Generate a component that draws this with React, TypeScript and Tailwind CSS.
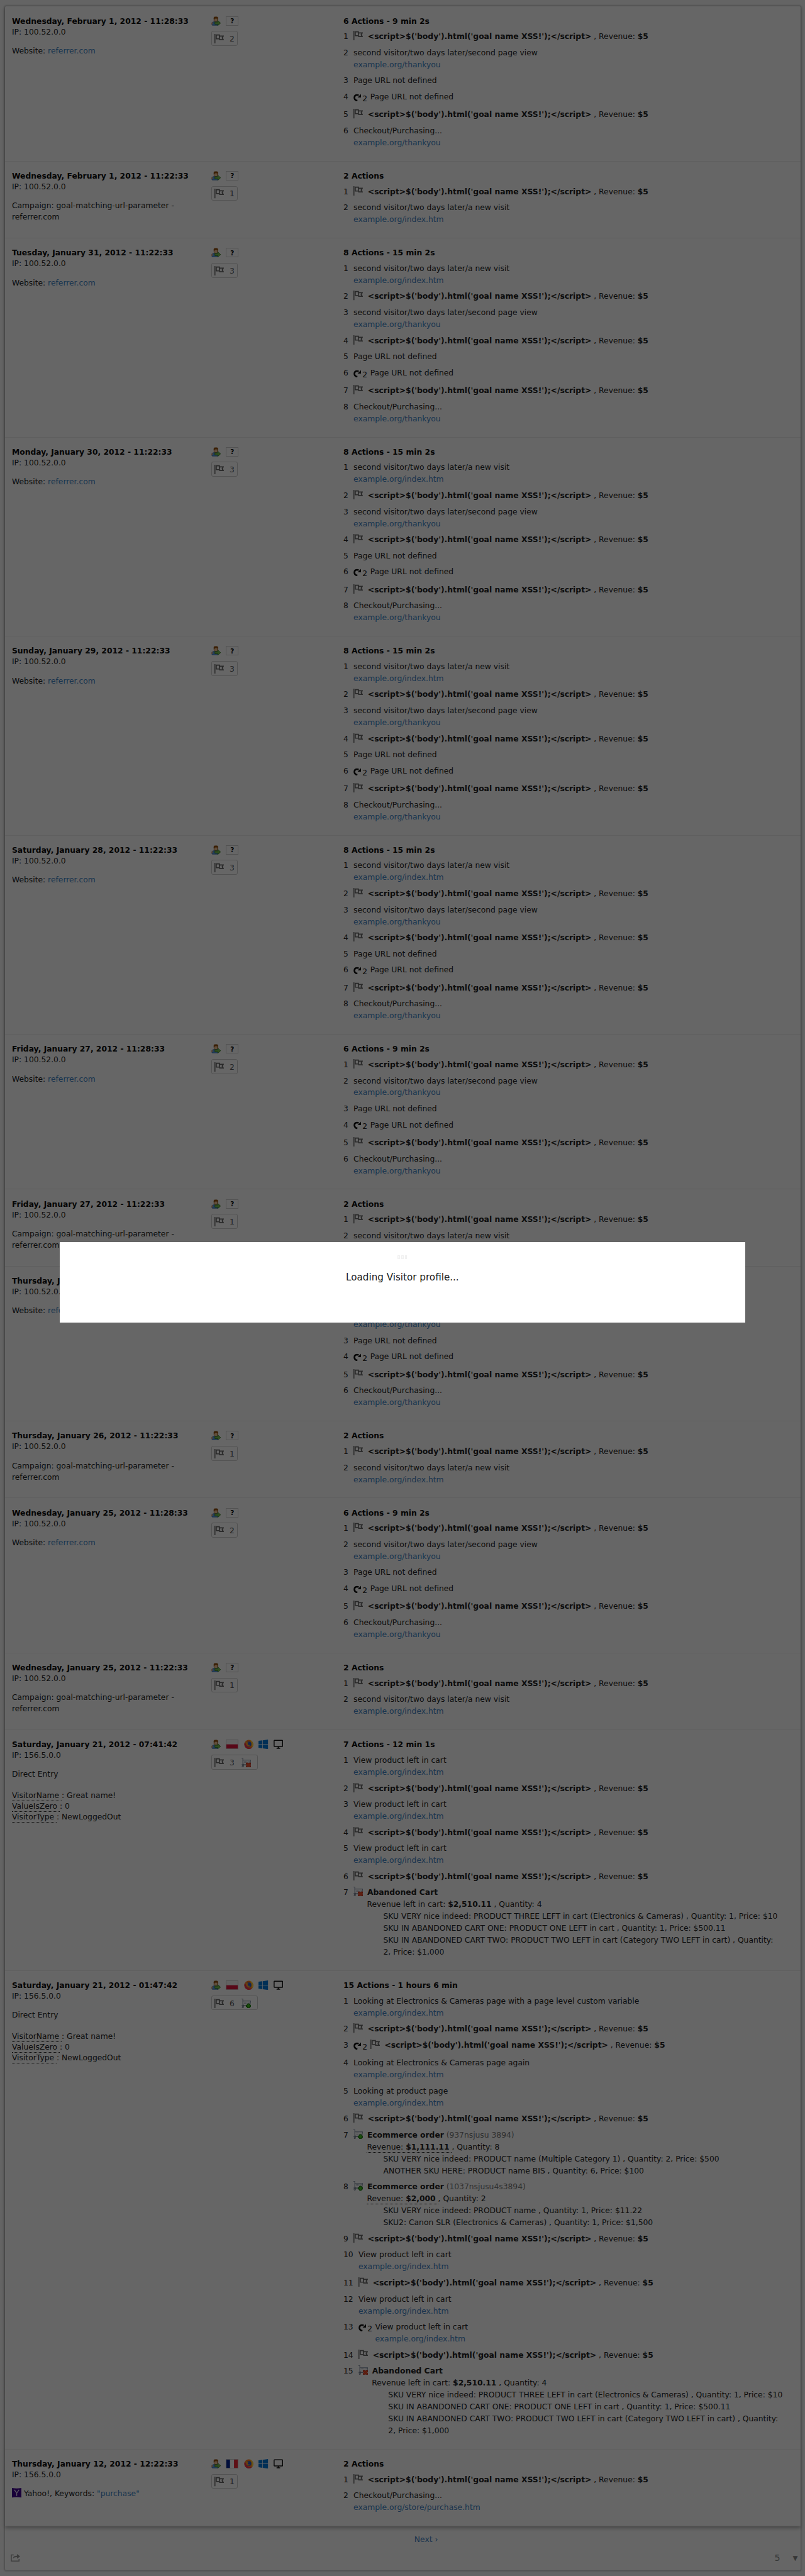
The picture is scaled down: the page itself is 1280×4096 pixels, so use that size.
import type { ReactNode } from "react";

type Product = string;
type Action =
  | { kind: "page"; title: string; url?: string; repeat?: number }
  | { kind: "goal"; repeat?: number }
  | { kind: "order"; id: string; revenue: string; quantity: number; products: Product[] }
  | { kind: "abandoned" };

type Visit = {
  date: string;
  ip: string;
  source: "website" | "campaign" | "direct" | "yahoo";
  country?: "pl" | "fr";
  goals: number;
  cart?: "plus" | "cross";
  summary: string;
  actions: Action[];
};

const goal: Action = { kind: "goal" };
const newVisit: Action = { kind: "page", title: "second visitor/two days later/a new visit", url: "example.org/index.htm" };
const secondView: Action = { kind: "page", title: "second visitor/two days later/second page view", url: "example.org/thankyou" };
const noUrl: Action = { kind: "page", title: "Page URL not defined" };
const noUrlTwice: Action = { kind: "page", title: "Page URL not defined", repeat: 2 };
const checkout: Action = { kind: "page", title: "Checkout/Purchasing...", url: "example.org/thankyou" };
const leftInCart: Action = { kind: "page", title: "View product left in cart", url: "example.org/index.htm" };

const six = [goal, secondView, noUrl, noUrlTwice, goal, checkout];
const two = [goal, newVisit];
const eight = [newVisit, goal, secondView, goal, noUrl, noUrlTwice, goal, checkout];

const long = (date: string): Visit => ({ date, ip: "100.52.0.0", source: "website", goals: 3, summary: "8 Actions - 15 min 2s", actions: eight });
const medium = (date: string): Visit => ({ date, ip: "100.52.0.0", source: "website", goals: 2, summary: "6 Actions - 9 min 2s", actions: six });
const short = (date: string): Visit => ({ date, ip: "100.52.0.0", source: "campaign", goals: 1, summary: "2 Actions", actions: two });

const visits: Visit[] = [
  medium("Wednesday, February 1, 2012 - 11:28:33"),
  short("Wednesday, February 1, 2012 - 11:22:33"),
  long("Tuesday, January 31, 2012 - 11:22:33"),
  long("Monday, January 30, 2012 - 11:22:33"),
  long("Sunday, January 29, 2012 - 11:22:33"),
  long("Saturday, January 28, 2012 - 11:22:33"),
  medium("Friday, January 27, 2012 - 11:28:33"),
  short("Friday, January 27, 2012 - 11:22:33"),
  medium("Thursday, January 26, 2012 - 11:28:33"),
  short("Thursday, January 26, 2012 - 11:22:33"),
  medium("Wednesday, January 25, 2012 - 11:28:33"),
  short("Wednesday, January 25, 2012 - 11:22:33"),
  {
    date: "Saturday, January 21, 2012 - 07:41:42",
    ip: "156.5.0.0",
    source: "direct",
    country: "pl",
    goals: 3,
    cart: "cross",
    summary: "7 Actions - 12 min 1s",
    actions: [leftInCart, goal, leftInCart, goal, leftInCart, goal, { kind: "abandoned" }],
  },
  {
    date: "Saturday, January 21, 2012 - 01:47:42",
    ip: "156.5.0.0",
    source: "direct",
    country: "pl",
    goals: 6,
    cart: "plus",
    summary: "15 Actions - 1 hours 6 min",
    actions: [
      { kind: "page", title: "Looking at Electronics & Cameras page with a page level custom variable", url: "example.org/index.htm" },
      goal,
      { kind: "goal", repeat: 2 },
      { kind: "page", title: "Looking at Electronics & Cameras page again", url: "example.org/index.htm" },
      { kind: "page", title: "Looking at product page", url: "example.org/index.htm" },
      goal,
      {
        kind: "order",
        id: "(937nsjusu 3894)",
        revenue: "$1,111.11",
        quantity: 8,
        products: [
          "SKU VERY nice indeed: PRODUCT name (Multiple Category 1) , Quantity: 2, Price: $500",
          "ANOTHER SKU HERE: PRODUCT name BIS , Quantity: 6, Price: $100",
        ],
      },
      {
        kind: "order",
        id: "(1037nsjusu4s3894)",
        revenue: "$2,000",
        quantity: 2,
        products: [
          "SKU VERY nice indeed: PRODUCT name , Quantity: 1, Price: $11.22",
          "SKU2: Canon SLR (Electronics & Cameras) , Quantity: 1, Price: $1,500",
        ],
      },
      goal,
      leftInCart,
      goal,
      leftInCart,
      { ...leftInCart, repeat: 2 } as Action,
      goal,
      { kind: "abandoned" },
    ],
  },
  {
    date: "Thursday, January 12, 2012 - 12:22:33",
    ip: "156.5.0.0",
    source: "yahoo",
    country: "fr",
    goals: 1,
    summary: "2 Actions",
    actions: [goal, { kind: "page", title: "Checkout/Purchasing...", url: "example.org/store/purchase.htm" }],
  },
];

const abandonedProducts = [
  "SKU VERY nice indeed: PRODUCT THREE LEFT in cart (Electronics & Cameras) , Quantity: 1, Price: $10",
  "SKU IN ABANDONED CART ONE: PRODUCT ONE LEFT in cart , Quantity: 1, Price: $500.11",
  "SKU IN ABANDONED CART TWO: PRODUCT TWO LEFT in cart (Category TWO LEFT in cart) , Quantity:",
  "2, Price: $1,000",
];

function FlagIcon() {
  return (
    <svg className="h-4 w-4 shrink-0" viewBox="0 0 16 16">
      <path d="M0 0h1.6v16H0z" fill="#666" />
      <path d="M3 1.8h5.3v6.4H3z M8.3 3.6h6.4L13 6.6l1.700 3H8.8V8.2" fill="none" stroke="#666" strokeWidth="1.800" />
    </svg>
  );
}

function RepeatIcon() {
  return (
    <svg className="h-[13px] w-[13px] shrink-0" viewBox="0 0 13 13">
      <path d="M6.600 11.800C3.300 11.200 1.600 9 1.600 6.300 1.600 3 4.800 1 8.800 2.800" fill="none" stroke="#111" strokeWidth="2.800" />
      <path d="M7 6.300H13V0.300z" fill="#111" />
    </svg>
  );
}

function VisitorIcon() {
  return (
    <svg className="h-4 w-4 shrink-0" viewBox="0 0 16 16">
      <path d="M1 14.500V11l2-1.500 4-1 4 1v5.500H2z" fill="#5c9fe6" stroke="#2c66a8" strokeWidth=".8" />
      <path d="M0 11l2-2v4.500H0z" fill="#e8a878" />
      <path d="M4.500 3h6v4.500L9 9H6L4.500 7.500z" fill="#f2c296" stroke="#96581f" strokeWidth=".7" />
      <path d="M4 4.500V1.800L5.500.5h4.300L11.500 2v5h-1V3.800H6V5z" fill="#94500f" />
      <path d="M6 9.500h5V7l4.600 4.300L11 15.500v-2.300H6z" fill="#78c050" stroke="#327c20" strokeWidth=".9" />
    </svg>
  );
}

function FirefoxIcon() {
  return (
    <svg className="h-4 w-4 shrink-0" viewBox="0 0 16 16">
      <circle cx="8" cy="8.200" r="7.600" fill="#ff7a1f" />
      <path d="M1 5C-.5 10 2.500 15.500 8 15.800c3 0 5-1.300 6.200-3C9 15 4 12 3.500 7z" fill="#f0304f" />
      <path d="M9.500.3c3.500 1.500 6.300 4.500 6.100 8.200-.2 2.500-1.500 4.700-3.300 5.900C14 10 13.500 5 9.500.3z" fill="#ffd83a" />
      <circle cx="8" cy="7.500" r="4.200" fill="#2a62c9" />
      <path d="M2.200 3l2.500 1.200L7.800 5 6.200 6.700l.3 2 3.500.5c-1 2-4.500 2.500-6 .3C3 8 2.500 5 2.200 3z" fill="#ff9a2a" />
    </svg>
  );
}

function WindowsIcon() {
  return (
    <svg className="h-4 w-4 shrink-0" viewBox="0 0 16 16" fill="#0078d7">
      <path d="M0 2.200L6.500 1.300V7.600H0zM7.300 1.200L16 0v7.600H7.300zM0 8.400h6.500v6.300L0 13.800zM7.300 8.400H16V16l-8.700-1.200z" />
    </svg>
  );
}

function MonitorIcon() {
  return (
    <svg className="h-4 w-4 shrink-0" viewBox="0 0 16 16">
      <rect x=".9" y="1.400" width="14.200" height="10.200" rx=".6" fill="none" stroke="#111" strokeWidth="1.600" />
      <path d="M7 12h2v2h2v1.500H5V14h2z" fill="#111" />
    </svg>
  );
}

function CountryFlag({ country }: { country: "pl" | "fr" }) {
  return (
    <svg className="h-4 w-[21px] shrink-0" viewBox="0 0 21 16">
      {country === "pl" ? (
        <>
          <path d="M0 0h21v8H0z" fill="#f5f5f5" />
          <path d="M0 8h21v8H0z" fill="#dc143c" />
        </>
      ) : (
        <>
          <path d="M0 0h7.200v16H0z" fill="#002395" />
          <path d="M7.200 0h6.600v16H7.200z" fill="#fff" />
          <path d="M13.800 0H21v16h-7.200z" fill="#ed2939" />
        </>
      )}
      <rect x=".5" y=".5" width="20" height="15" fill="none" stroke="#ccc" />
    </svg>
  );
}

function CartIcon({ mark }: { mark: "plus" | "cross" }) {
  return (
    <svg className="h-4 w-4 shrink-0" viewBox="0 0 16 16">
      <path d="M0 .6h2.200V11.500M2.500 4h13l-1 5.500" fill="none" stroke="#8793a5" strokeWidth="1.100" />
      <path d="M4 5.800h10M4 7.800h9" fill="none" stroke="#aab2bf" strokeWidth="1" strokeDasharray="1.400 .8" />
      <path d="M.3 11.800H8M3 10v4" fill="none" stroke="#5c6a7e" strokeWidth="1.200" />
      <circle cx="2.300" cy="14.300" r="1.200" fill="none" stroke="#5c6a7e" strokeWidth="1" />
      {mark === "plus" ? (
        <path d="M10.200 8.500h3v2.200h2.400v3h-2.400v2.100h-3v-2.100H7.900v-3h2.300z" fill="#43c21c" stroke="#0e6a06" strokeWidth="1" />
      ) : (
        <path d="M8 8.500h2.500l1.300 1.300L13 8.500h2.500V11l-1 1.200 1 1.300v2.200H13l-1.200-1.200-1.300 1.200H8v-2.200l1.200-1.300L8 11z" fill="#f0502c" stroke="#b01c08" strokeWidth=".9" />
      )}
    </svg>
  );
}

function YahooIcon() {
  return (
    <svg className="h-4 w-4 shrink-0" viewBox="0 0 16 16">
      <path d="M0 0q8 1.600 16 0v16q-8-1.600-16 0z" fill="#400090" />
      <path d="M4 3l4 5.600L12 3M8 8.500V13.500" fill="none" stroke="#e4dcf0" strokeWidth="1.500" />
    </svg>
  );
}

function ExportIcon() {
  return (
    <svg className="h-[13px] w-4" viewBox="0 0 16 13">
      <path d="M5 1.500H1v10.300h13V8.500" fill="none" stroke="#999" strokeWidth="1.600" />
      <path d="M3.500 8C4 4.500 6.500 2.800 10.500 2.800V0L16 4l-5.500 4V5.300C7.500 5.200 5.500 6 3.500 8z" fill="#999" />
    </svg>
  );
}

function Goal() {
  return (
    <div className="flex">
      <FlagIcon />
      <span className="ml-2 whitespace-pre">
        <b>{"<script>$('body').html('goal name XSS!');</script>"}</b>
        {" , Revenue: "}
        <b>$5</b>
      </span>
    </div>
  );
}

function Dotted({ children }: { children: ReactNode }) {
  return <span className="inline-block h-[18px] whitespace-pre border-b border-dotted border-[#212121] leading-[18px]">{children}</span>;
}

function CartDetails({ mark, title, id, totals, products }: { mark: "plus" | "cross"; title: string; id?: string; totals: ReactNode; products: Product[] }) {
  return (
    <div>
      <div className="flex">
        <CartIcon mark={mark} />
        <b className="ml-[7px]">{title}</b>
        {id && <span className="ml-1 text-[#777]">{id}</span>}
      </div>
      <div className="h-5 whitespace-pre pl-[22.500px]">{totals}</div>
      <ul className="pl-[50px]">
        {products.map((product) => (
          <li key={product} className="whitespace-nowrap">{product}</li>
        ))}
      </ul>
    </div>
  );
}

function ActionBody({ action }: { action: Action }) {
  switch (action.kind) {
    case "goal":
      return <Goal />;
    case "page":
      return (
        <div>
          <div>{action.title}</div>
          {action.url && <div className="text-[#4183c4]">{action.url}</div>}
        </div>
      );
    case "order":
      return (
        <CartDetails
          mark="plus"
          title="Ecommerce order"
          id={action.id}
          totals={<><Dotted>Revenue: <b>{action.revenue}</b> </Dotted>{`, Quantity: ${action.quantity}`}</>}
          products={action.products}
        />
      );
    case "abandoned":
      return (
        <CartDetails
          mark="cross"
          title="Abandoned Cart"
          totals={<>Revenue left in cart: <b>$2,510.11</b> , Quantity: 4</>}
          products={abandonedProducts}
        />
      );
  }
}

function ActionItem({ action, index }: { action: Action; index: number }) {
  const repeat = "repeat" in action ? action.repeat : undefined;
  const extra = repeat && !("url" in action && action.url);
  return (
    <li className={extra ? "flex pb-[10px]" : "flex pb-[7px]"}>
      <span className="mr-[8.700px]">{index}</span>
      {repeat && (
        <span className="flex w-[28px] shrink-0">
          <span className="mt-1"><RepeatIcon /></span>
          <span className="mt-[3px] ml-[2px] h-4">{repeat}</span>
        </span>
      )}
      <ActionBody action={action} />
    </li>
  );
}

function Source({ source }: { source: Visit["source"] }) {
  if (source === "website") return <p>Website: <span className="text-[#4183c4]">referrer.com</span></p>;
  if (source === "campaign") return <p>Campaign: goal-matching-url-parameter -<br />referrer.com</p>;
  if (source === "yahoo")
    return (
      <p className="flex whitespace-pre"><YahooIcon /><span className="ml-1">Yahoo!, Keywords: <span className="text-[#4183c4]">"purchase"</span></span></p>
    );
  return (
    <>
      <p className="-mt-px">Direct Entry</p>
      <div className="mt-[18px] leading-[18px]">
        <p className="flex whitespace-pre"><Dotted>VisitorName </Dotted>: Great name!</p>
        <p className="flex whitespace-pre"><Dotted>ValueIsZero </Dotted>: 0</p>
        <p className="flex whitespace-pre"><Dotted>VisitorType </Dotted>: NewLoggedOut</p>
      </div>
    </>
  );
}

function VisitRow({ visit }: { visit: Visit }) {
  return (
    <section className="flex border-b border-[#eee] pl-3">
      <div className="w-[334px] shrink-0 pt-4">
        <h2 className="h-[18px] whitespace-nowrap font-bold leading-[18px] text-[#0d0d0d]">{visit.date}</h2>
        <p className="leading-[18px]">IP: {visit.ip}</p>
        <div className="mt-[13px] leading-[19px]"><Source source={visit.source} /></div>
      </div>
      <div className="w-[222px] shrink-0 pt-4">
        <div className="flex gap-[9px]">
          <VisitorIcon />
          {visit.country ? (
            <>
              <CountryFlag country={visit.country} />
              <FirefoxIcon />
              <WindowsIcon />
              <MonitorIcon />
            </>
          ) : (
            <span className="flex h-4 w-[21px] items-center justify-center border border-[#ccc] text-[11px] font-bold leading-none text-black">?</span>
          )}
        </div>
        <div className={visit.cart ? "mt-[9px] flex h-[25px] w-[79px] rounded-[3px] border border-[#ccc] pt-1 pl-[5px]" : "mt-[9px] flex h-[25px] w-[45px] rounded-[3px] border border-[#ccc] pt-1 pl-[5px]"}>
          <FlagIcon />
          <span className="ml-[9px] w-5 text-[13px] leading-[17px] text-[#555]">{visit.goals}</span>
          {visit.cart && <CartIcon mark={visit.cart} />}
        </div>
      </div>
      <div className="pt-[15px] pb-[13px]">
        <h2 className="mb-[6px] h-5 font-bold leading-5 text-[#0d0d0d]">{visit.summary}</h2>
        <ol className="leading-5">
          {visit.actions.map((action, i) => (
            <ActionItem key={i} action={action} index={i + 1} />
          ))}
        </ol>
      </div>
    </section>
  );
}

export default function App() {
  return (
    <div className="h-[4096px] w-[1280px] overflow-hidden bg-[#666]">
      <div className="relative h-[4321px] w-[1351px] bg-[#fafafa] pt-[11px] pl-2 font-['DejaVu_Sans'] text-[13px] text-[#212121] [zoom:0.948]">
        <main className="h-[4300px] w-[1335px] rounded-[2px] bg-white shadow-[0_0_3px_1px_rgba(0,0,0,0.3)]">
          <div className="shadow-[0_3px_6px_rgba(0,0,0,0.3)]">
            {visits.map((visit) => (
              <VisitRow key={visit.date} visit={visit} />
            ))}
          </div>
          <div className="pt-[12px] pl-[687px] leading-5 text-[#4183c4]">Next ›</div>
          <footer className="flex items-center justify-between pt-[11px] pl-[10px] pr-[5px] text-[15px] leading-5 text-[#888]">
            <ExportIcon />
            <span className="flex items-center gap-[21px]">5 <span className="text-[11px]">▼</span></span>
          </footer>
        </main>
        <div className="absolute inset-0 bg-black/60" />
        <div role="dialog" className="absolute top-[2083px] left-[100px] flex h-[135px] w-[1150px] flex-col items-center bg-white pt-[22px]">
          <div className="flex h-[7px] gap-[2px]">
            <span className="w-1 border border-[#f0f0f0] bg-[#f8f8f8]" />
            <span className="w-1 border border-[#f0f0f0] bg-[#f8f8f8]" />
            <span className="w-1 border border-[#f0f0f0] bg-[#f8f8f8]" />
          </div>
          <p className="mt-[19px] text-[16px] leading-6 text-[#212121]">Loading Visitor profile...</p>
        </div>
      </div>
    </div>
  );
}
